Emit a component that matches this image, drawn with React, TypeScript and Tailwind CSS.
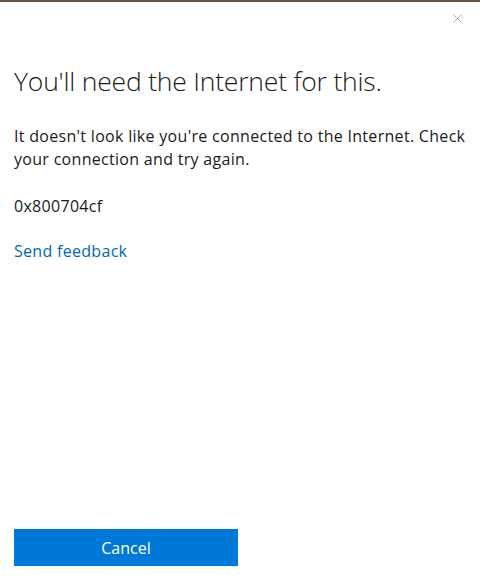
import { X } from "lucide-react";

export default function App() {
  return (
    <div className="w-[480px] h-[582px] bg-white border-t-2 border-[#6e5040] flex flex-col font-['Open_Sans',sans-serif] text-[#1a1a1a]">
      {/* Close */}
      <div className="flex justify-end pr-[15px] pt-[9px] h-[40px]">
        <X size={15} strokeWidth={1.1} className="text-[#8a8a8a]" />
      </div>

      {/* Content */}
      <div className="px-[14px] flex flex-col">
        <h1 className="text-[26.5px] font-light leading-[32px] mt-[23px] tracking-[-0.2px]">
          You'll need the Internet for this.
        </h1>
        <p className="text-[16px] leading-[23px] mt-[28px] tracking-[0.3px]">
          It doesn't look like you're connected to the Internet. Check your connection and try again.
        </p>
        <p className="text-[16px] leading-[23px] mt-[24px] tracking-[0.3px]">0x800704cf</p>
        <a href="#" className="text-[16px] leading-[23px] mt-[22px] text-[#0067b8] w-fit tracking-[0.3px]">
          Send feedback
        </a>
      </div>

      <div className="mt-auto px-[14px] pb-[16px]">
        <button className="w-[224px] h-[37px] bg-[#0078d7] text-white text-[16px]">
          Cancel
        </button>
      </div>
    </div>
  );
}
